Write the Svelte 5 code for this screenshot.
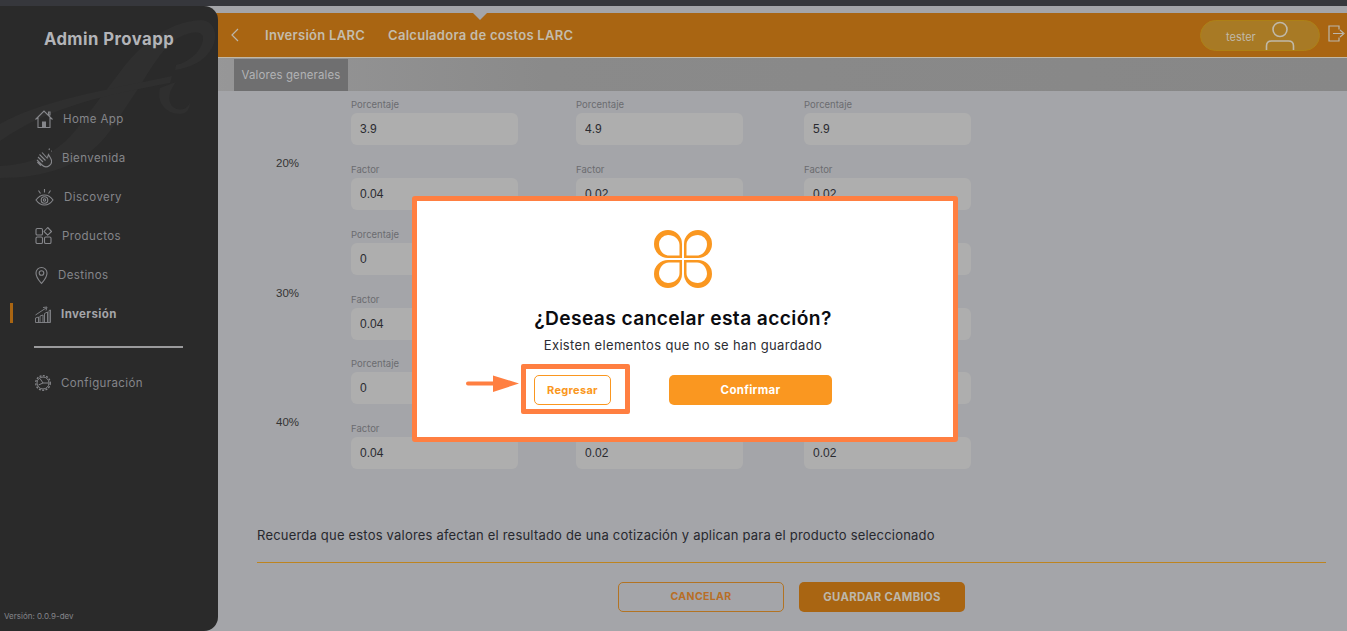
<script>
  const nav = [
    { id: 'home', label: 'Home App', w: 18 },
    { id: 'clap', label: 'Bienvenida', w: 17 },
    { id: 'eye', label: 'Discovery', w: 19 },
    { id: 'grid', label: 'Productos', w: 17 },
    { id: 'pin', label: 'Destinos', w: 13 },
    { id: 'chart', label: 'Inversión', w: 16, active: true }
  ]

  const groups = [
    { pct: '20%', values: [['3.9', '0.04'], ['4.9', '0.02'], ['5.9', '0.02']] },
    { pct: '30%', values: [['0', '0.04'], ['0', '0.02'], ['0', '0.02']] },
    { pct: '40%', values: [['0', '0.04'], ['0', '0.02'], ['0', '0.02']] }
  ]

  const petals = ['', 'translate(58 0) scale(-1 1)', 'translate(0 58) scale(1 -1)', 'translate(58 58) scale(-1 -1)']
</script>

{#snippet icon(id, w)}
  <svg class="nav-icon" width={w} height="20" viewBox="0 0 {w} 20" fill="none" stroke="currentColor" stroke-width="1.1">
    {#if id === 'home'}
      <path d="M.5 10.500 9 2l8.500 8.500M3 8.500v10h12v-10M13.500 3v3h1.500V3Z" />
      <rect x="7" y="12.500" width="4" height="6" fill="currentColor" stroke="none" />
    {:else if id === 'clap'}
      <path d="M3 9l5 5M4.500 6.500l6 6M7 4.500l5.500 6M2 12l5 5c2 2 5 2.500 7.500.5 2.500-2 2.500-5 1-7.500l-2-3.500-1 3M14 2l.5-1.500M16.500 3.500 18 2" />
      <path d="M2.500 14l3.500 3.500" stroke-width="1.600" />
    {:else if id === 'eye'}
      <path d="M1 13c2.500-3.500 5.500-5 8.500-5s6 1.500 8.500 5c-2.500 3.500-5.500 5-8.500 5s-6-1.500-8.500-5Z" />
      <circle cx="9.500" cy="13" r="3.300" />
      <circle cx="9.500" cy="13" r="1.200" />
      <path d="M9.500 2v3.500M3.500 3.500 5.500 6.500M15.500 3.500 13.500 6.500" />
    {:else if id === 'grid'}
      <rect x="1" y="2.500" width="6.500" height="6.500" rx="1.300" />
      <rect x="1" y="11" width="6.500" height="6.500" rx="1.300" />
      <rect x="9.500" y="11" width="6.500" height="6.500" rx="1.300" />
      <path d="M12.700 1.500 16.500 5.500 12.700 9.200 9 5.500Z" stroke-linejoin="round" />
    {:else if id === 'pin'}
      <path d="M6.500 18.500C3.500 15 1 12.500 1 8a5.500 5.500 0 0 1 11 0c0 4.500-2.500 7-5.500 10.500Z" />
      <circle cx="6.500" cy="8" r="2.300" />
    {:else if id === 'chart'}
      <path d="M.5 18.500V14l3-1v5.500M5 18.500V12l3-1v7.500M9.500 18.500V9.500l3-1.500v10.500M14 18.500V6.500l1.500-.5v12.500M.5 18.500h15" stroke-width=".9" />
      <path d="M.5 11 11 4M8 3.500l4-.5-1 3.500" stroke-width=".9" />
    {/if}
  </svg>
{/snippet}

<div class="app">
  <div class="topstrip"></div>
  <div class="shell">
    <aside class="sidebar">
      <svg class="watermark" width="218" height="210" viewBox="0 0 218 210">
        <path d="M0 160C38 158 62 144 82 116L126 58C148 32 172 16 200 14 214 14 219 28 212 42 205 55 190 62 175 64L176 59C190 56 202 44 203 33 204 24 190 25 178 32 165 40 155 55 140 80L110 125C85 160 45 172 0 172Z" />
        <path d="M0 118C40 95 100 85 172 70L170 77C110 88 50 100 0 135Z" />
        <path d="M160 82c-4 14 6 26 20 26 6 0 10-4 10-12-2 8-12 10-18 4-4-6-4-14 4-24Z" />
      </svg>
      <h1>Admin Provapp</h1>
      <nav>
        {#each nav as item}
          <a href="#top" class="nav-item" class:active={item.active}>
            {@render icon(item.id, item.w)}
            <span>{item.label}</span>
          </a>
        {/each}
        <hr />
        <a href="#top" class="nav-item">
          <svg class="nav-icon" width="16" height="20" viewBox="0 0 16 20" fill="none" stroke="currentColor" stroke-width="1">
            <circle cx="8" cy="10" r="7.300" stroke-dasharray="2 1.400" stroke-width="1.300" />
            <circle cx="8" cy="10" r="6" />
            <path d="M5 5.500 8 10l-4.500 2M8 10h5.500" />
          </svg>
          <span>Configuración</span>
        </a>
      </nav>
      <small>Versión: 0.0.9-dev</small>
    </aside>

    <main>
      <header>
        <svg class="back" width="8" height="14" viewBox="0 0 8 14" fill="none" stroke="currentColor" stroke-width="1.200"><path d="M7 1 1 7l6 6" /></svg>
        <span class="crumb first">Inversión LARC</span>
        <span class="crumb">Calculadora de costos LARC</span>
        <i class="notch"></i>
        <div class="user">
          <span>tester</span>
          <svg width="30" height="30" viewBox="0 0 30 30" fill="none" stroke="currentColor" stroke-width="1.600">
            <circle cx="15" cy="8.500" r="7" />
            <path d="M1.500 29v-4c0-3 2-5 5-5h17c3 0 5 2 5 5v4" />
          </svg>
        </div>
        <svg class="logout" width="17" height="17" viewBox="0 0 17 17" fill="none" stroke="currentColor" stroke-width="1.200">
          <path d="M11 4.500V1H1v15h10v-3.500M5 8.500h10M12 5l4 3.500L12 12" />
        </svg>
      </header>

      <div class="tabs"><button class="tab">Valores generales</button></div>

      <section class="content">
        {#each groups as group}
          <div class="group">
            <span class="pct">{group.pct}</span>
            {#each group.values as pair}
              <div class="col">
                <label>Porcentaje<input value={pair[0]} readonly /></label>
                <label>Factor<input value={pair[1]} readonly /></label>
              </div>
            {/each}
          </div>
        {/each}

        <p class="note">Recuerda que estos valores afectan el resultado de una cotización y aplican para el producto seleccionado</p>
        <div class="actions">
          <button class="btn outline">CANCELAR</button>
          <button class="btn solid">GUARDAR CAMBIOS</button>
        </div>
      </section>
    </main>
  </div>

  <div class="modal">
    <svg class="logo" width="58" height="58" viewBox="0 0 58 58" fill="#fa9720" fill-rule="evenodd">
      {#each petals as t}
        <path transform={t} d="M28 28H14A14 14 0 1 1 28 14ZM25.500 25.500H15C9 25.500 5 20 5 14A9 9 0 0 1 14 5C20 5 25.500 9 25.500 15Z" />
      {/each}
    </svg>
    <h2>¿Deseas cancelar esta acción?</h2>
    <p>Existen elementos que no se han guardado</p>
    <div class="modal-actions">
      <button class="m-btn back-btn">
        Regresar
        <span class="highlight"></span>
        <svg class="arrow" width="54" height="18" viewBox="0 0 54 18" fill="#ff7f41">
          <path d="M2 6.500h25V.5L53 8.500 27 17V10.500H2a2 2 0 0 1 0-4Z" />
        </svg>
      </button>
      <button class="m-btn confirm">Confirmar</button>
    </div>
  </div>
</div>

<style>
  :global(body) {
    margin: 0;
    background: #a4a5a9;
  }

  .app {
    position: relative;
    height: 631px;
    overflow: hidden;
    font-family: Inter, "Liberation Sans", sans-serif;
    background: #a4a5a9;
  }

  .topstrip {
    height: 6px;
    background: #36373c;
  }

  .shell {
    display: flex;
    height: 625px;
  }

  .sidebar {
    position: relative;
    z-index: 1;
    flex: 0 0 218px;
    display: flex;
    flex-direction: column;
    overflow: hidden;
    background: #2a2a2a;
    border-radius: 0 14px 14px 0;
    color: #85868a;
  }

  .watermark {
    position: absolute;
    top: 0;
    left: 0;
    fill: #2f2f2f;
  }

  h1 {
    position: relative;
    margin: 24px 0 0;
    font-size: 16.700px;
    line-height: 19px;
    font-weight: 700;
    letter-spacing: .45px;
    text-align: center;
    color: #b3b4b8;
  }

  nav {
    position: relative;
    margin-top: 50px;
    display: flex;
    flex-direction: column;
  }

  .nav-item {
    position: relative;
    display: flex;
    align-items: center;
    gap: 10px;
    height: 39px;
    padding-left: 35px;
    font-size: 11.500px;
    letter-spacing: .4px;
    color: #85868a;
    text-decoration: none;
  }

  .nav-item.active span {
    font-weight: 700;
    color: #a4a5a9;
  }

  .nav-item.active::before {
    content: "";
    position: absolute;
    left: 10px;
    top: 9px;
    width: 3px;
    height: 20px;
    background: #a96512;
  }

  hr {
    width: 149px;
    margin: 13px 0 15px 34px;
    border: 0;
    border-top: 2px solid #9a9a9c;
  }

  small {
    position: absolute;
    left: 4px;
    bottom: 10px;
    font-size: 8px;
    color: #85868a;
  }

  main {
    flex: 1;
    min-width: 0;
    margin-left: -14px;
    padding: 7px 0 0 14px;
  }

  header {
    position: relative;
    display: flex;
    align-items: center;
    height: 44px;
    padding-left: 14px;
    background: #a96512;
    border-bottom: 1px solid #c2b8a6;
    margin-left: -14px;
    color: #bcb6ab;
  }

  .back {
    margin-left: 13px;
    margin-top: -1px;
    flex: none;
  }

  .crumb {
    font-size: 13px;
    font-weight: 600;
    letter-spacing: .28px;
    color: #c4bcac;
    margin-left: 23px;
  }

  .crumb.first {
    margin-left: 26px;
  }

  .notch {
    position: absolute;
    left: 269px;
    top: 0;
    width: 0;
    height: 0;
    border-left: 7px solid transparent;
    border-right: 7px solid transparent;
    border-top: 7px solid #a4a5a9;
  }

  .user {
    margin-left: auto;
    display: flex;
    align-items: center;
    justify-content: space-between;
    box-sizing: border-box;
    width: 120px;
    height: 31px;
    padding: 0 24px 0 25px;
    background: #a87a25;
    border: 1px solid #ae8016;
    border-radius: 16px;
    font-size: 11px;
    color: #c0b9a9;
  }

  .user span {
    margin-top: 4px;
  }

  .user svg {
    margin-top: 1px;
    flex: none;
  }

  .logout {
    margin: -4px 2px 0 8px;
    flex: none;
  }

  .tabs {
    height: 33px;
    background: linear-gradient(90deg, #979798, #8a8a8a 30%, #878787);
    margin-left: -14px;
    padding-left: 30px;
    display: flex;
    align-items: flex-end;
  }

  .tab {
    box-sizing: border-box;
    width: 114px;
    height: 32px;
    padding: 0;
    border: 0;
    background: #6f6f70;
    color: #b2b3b5;
    font: 400 11.400px Inter, sans-serif;
    letter-spacing: .15px;
  }

  .content {
    padding: 7px 0 0 39px;
  }

  .group {
    display: grid;
    grid-template-columns: 94px 225px 228px 167px;
    align-items: center;
    margin-bottom: 17.500px;
  }

  .pct {
    font: 11.500px "Liberation Sans", sans-serif;
    color: #333;
    padding-left: 19px;
    margin-top: 18px;
  }

  .col {
    display: flex;
    flex-direction: column;
    gap: 18px;
  }

  label {
    display: flex;
    flex-direction: column;
    gap: 2px;
    padding-top: 1px;
    font: 9.500px/12px Inter, "Liberation Sans", sans-serif;
    color: #6b6c70;
  }

  input {
    box-sizing: border-box;
    width: 167px;
    height: 32px;
    padding: 0 9px;
    border: 0;
    border-radius: 6px;
    background: #aeaeae;
    color: #2a2b30;
    font: 12px "Liberation Sans", sans-serif;
    outline: 0;
  }

  .note {
    margin: 57.500px 21px 0 0;
    padding-bottom: 18px;
    border-bottom: 1px solid #bd8420;
    font-size: 13px;
    line-height: 17px;
    letter-spacing: .2px;
    color: #27282e;
  }

  .actions {
    display: flex;
    gap: 15px;
    margin: 19px 0 0 361px;
  }

  .btn {
    box-sizing: border-box;
    width: 166px;
    height: 30px;
    padding: 0;
    border-radius: 5px;
    font: 700 10.500px Inter, sans-serif;
    letter-spacing: .35px;
  }

  .outline {
    background: none;
    border: 1px solid #b27323;
    color: #b86e26;
  }

  .solid {
    background: #a96512;
    border: 0;
    color: #bdb7aa;
    font-size: 11.300px;
  }

  .modal {
    position: absolute;
    left: 412px;
    top: 196px;
    box-sizing: border-box;
    width: 546px;
    height: 246px;
    padding: 29px 4px 0 0;
    display: flex;
    flex-direction: column;
    align-items: center;
    background: #fff;
    border: 5px solid #ff7f41;
    border-radius: 3px;
    color: #111;
  }

  .logo {
    flex: none;
    margin-left: -1px;
  }

  h2 {
    margin: 18px 0 0;
    font-size: 19.200px;
    line-height: 24px;
    font-weight: 600;
    letter-spacing: .4px;
    color: #0c0c10;
  }

  .modal p {
    margin: 7px 0 0;
    font-size: 13px;
    line-height: 16px;
    letter-spacing: .35px;
    color: #2c2d33;
  }

  .modal-actions {
    align-self: stretch;
    display: flex;
    gap: 58px;
    margin: 22px 0 0 117px;
  }

  .m-btn {
    height: 30px;
    padding: 0;
    border-radius: 5px;
    font: 700 11px Inter, sans-serif;
    letter-spacing: .3px;
  }

  .back-btn {
    position: relative;
    width: 77px;
    background: #fff;
    border: 1px solid #fa9720;
    color: #fa9720;
  }

  .confirm {
    width: 163px;
    background: #fa9720;
    border: 0;
    color: #fff;
    font-size: 11.500px;
  }

  .highlight {
    position: absolute;
    left: -14px;
    right: -20px;
    top: -12px;
    bottom: -10px;
    border: 5px solid #ff7f41;
    border-radius: 2px;
  }

  .arrow {
    position: absolute;
    left: -69px;
    top: -1px;
  }
</style>
